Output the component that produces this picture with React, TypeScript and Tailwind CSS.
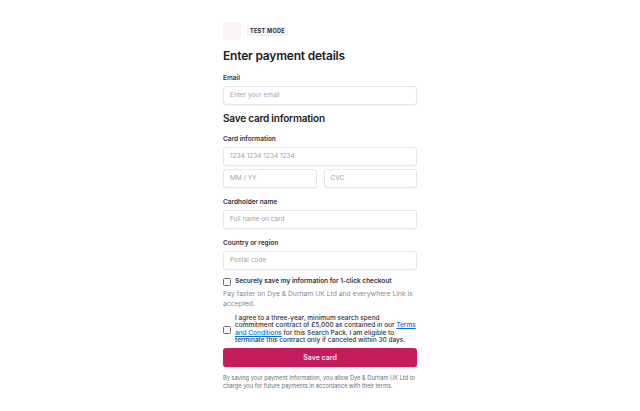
import React from "react";

const Field = ({ placeholder, className = "" }: { placeholder: string; className?: string }) => (
  <div
    className={`h-[19px] flex items-center px-[6px] rounded-[3px] border border-[#e6e6e6] bg-white shadow-[0_1px_1px_rgba(0,0,0,0.03)] text-[6.5px] text-[#a3a3a3] ${className}`}
  >
    {placeholder}
  </div>
);

const Label = ({ children }: { children: React.ReactNode }) => (
  <div className="text-[6.5px] font-semibold text-[#30313d] leading-[9px]">{children}</div>
);

const Box = () => (
  <div className="w-[8px] h-[8px] shrink-0 rounded-[1.5px] border border-[#6d6e78] bg-white" />
);

export default function App() {
  return (
    <div className="w-[640px] h-[411px] bg-white flex justify-center" style={{ fontFamily: "Inter, 'Noto Sans', sans-serif" }}>
      <div className="w-[194px] pt-[22px] flex flex-col">
        {/* header */}
        <div className="flex items-center gap-[6px]">
          <div className="w-[18px] h-[18px] rounded-[3px] bg-[#faf3f3]" />
          <div className="h-[9px] px-[3px] rounded-[2px] bg-[#f3f3f5] text-[5.5px] font-bold tracking-[0.3px] text-[#2e2e3a] flex items-center">
            TEST MODE
          </div>
        </div>

        <div className="mt-[8px] text-[12px] font-semibold tracking-[-0.2px] text-[#1a1b25] leading-[16px]">Enter payment details</div>

        <div className="mt-[10px]"><Label>Email</Label></div>
        <Field placeholder="Enter your email" className="mt-[3px]" />

        <div className="mt-[6px] text-[10px] font-semibold tracking-[-0.2px] text-[#1a1b25] leading-[14px]">Save card information</div>

        <div className="mt-[10px]"><Label>Card information</Label></div>
        <Field placeholder="1234 1234 1234 1234" className="mt-[3px]" />
        <div className="mt-[3px] flex gap-[7px]">
          <Field placeholder="MM / YY" className="flex-1" />
          <Field placeholder="CVC" className="flex-1" />
        </div>

        <div className="mt-[10px]"><Label>Cardholder name</Label></div>
        <Field placeholder="Full name on card" className="mt-[3px]" />

        <div className="mt-[10px]"><Label>Country or region</Label></div>
        <Field placeholder="Postal code" className="mt-[3px]" />

        <div className="mt-[7px] flex items-center gap-[4px]">
          <Box />
          <span className="text-[6.5px] font-semibold text-[#30313d]">Securely save my information for 1-click checkout</span>
        </div>
        <div className="mt-[2px] text-[6.8px] leading-[10px] text-[#8a8a93]">
          Pay faster on Dye &amp; Durham UK Ltd and everywhere Link is accepted.
        </div>

        <div className="mt-[6px] flex items-center gap-[4px]">
          <Box />
          <div className="text-[6.5px] leading-[7.4px] font-medium text-[#30313d]">
            I agree to a three-year, minimum search spend commitment contract of £5,000 as contained in our{" "}
            <span className="text-[#0570de] underline">Terms and Conditions</span> for this Search Pack. I am eligible to
            terminate this contract only if canceled within 30 days.
          </div>
        </div>

        <div className="mt-[4px] h-[19px] rounded-[3px] bg-[#c41c5c] flex items-center justify-center text-[7px] font-semibold text-[#fde3ec] shadow-[0_1px_2px_rgba(0,0,0,0.1)]">
          Save card
        </div>

        <div className="mt-[7px] text-[5.7px] leading-[8px] text-[#6d6e78]">
          By saving your payment information, you allow Dye &amp; Durham UK Ltd to charge you for future payments in accordance with their terms.
        </div>
      </div>
    </div>
  );
}
